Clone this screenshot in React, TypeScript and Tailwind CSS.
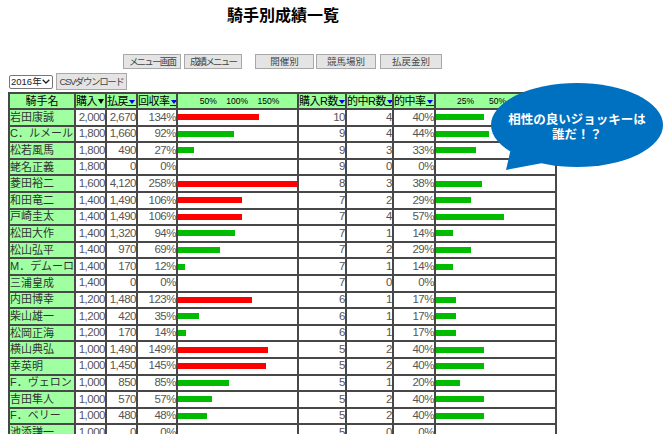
const font = '[font-family:"Liberation_Sans","Noto_Sans_CJK_JP",sans-serif]'

const riders: [string, string, string, number, number, number, number][] = [
  ["岩田康誠", "2,000", "2,670", 134, 10, 4, 40],
  ["C．ルメール", "1,800", "1,660", 92, 9, 4, 44],
  ["松若風馬", "1,800", "490", 27, 9, 3, 33],
  ["蛯名正義", "1,800", "0", 0, 9, 0, 0],
  ["菱田裕二", "1,600", "4,120", 258, 8, 3, 38],
  ["和田竜二", "1,400", "1,490", 106, 7, 2, 29],
  ["戸崎圭太", "1,400", "1,490", 106, 7, 4, 57],
  ["松田大作", "1,400", "1,320", 94, 7, 1, 14],
  ["松山弘平", "1,400", "970", 69, 7, 2, 29],
  ["M．デムーロ", "1,400", "170", 12, 7, 1, 14],
  ["三浦皇成", "1,400", "0", 0, 7, 0, 0],
  ["内田博幸", "1,200", "1,480", 123, 6, 1, 17],
  ["柴山雄一", "1,200", "420", 35, 6, 1, 17],
  ["松岡正海", "1,200", "170", 14, 6, 1, 17],
  ["横山典弘", "1,000", "1,490", 149, 5, 2, 40],
  ["幸英明", "1,000", "1,450", 145, 5, 2, 40],
  ["F．ヴェロン", "1,000", "850", 85, 5, 1, 20],
  ["吉田隼人", "1,000", "570", 57, 5, 2, 40],
  ["F．ベリー", "1,000", "480", 48, 5, 2, 40],
  ["池添謙一", "1,000", "0", 0, 5, 0, 0],
]

const menuButton =
  "h-[15px] border border-[#a8a8a8] bg-[#e4e4e4] text-[9.5px] leading-none text-[#444] flex items-center justify-center whitespace-nowrap"

function SortHead({ label, active }: { label: string; active?: boolean }) {
  return (
    <th className="border-2 border-[#484848] p-0 bg-[#99ff99] font-normal text-[11px] leading-none text-left whitespace-nowrap overflow-hidden">
      <div className="flex items-center justify-between">
        <span className="tracking-[-0.5px]">{label}</span>
        {active ? (
          <span className="w-0 h-0 mr-[1px] border-x-[3px] border-t-[5px] border-x-transparent border-t-black" />
        ) : (
          <span className="w-[8px] mt-[3px] border-b border-[#0000ee] flex justify-center shrink-0">
            <span className="w-0 h-0 mb-[1px] border-x-[3px] border-t-[4px] border-x-transparent border-t-[#0000ee]" />
          </span>
        )}
      </div>
    </th>
  )
}

function NumCell({ children }: { children: React.ReactNode }) {
  return (
    <td className="border-2 border-[#484848] bg-white p-0 text-right text-[11.5px] leading-none tracking-[-0.5px] text-[#555] whitespace-nowrap overflow-hidden">
      {children}
    </td>
  )
}

function BarCell({ width, color }: { width: number; color: string }) {
  return (
    <td className="border-2 border-[#484848] bg-white p-0 overflow-hidden">
      {width > 0 && (
        <div className={`h-[6px] ${color}`} style={{ width: Math.min(width, 120) }} />
      )}
    </td>
  )
}

export default function App() {
  return (
    <div className={`relative w-[670px] h-[434px] overflow-hidden bg-white text-black ${font}`}>
      <h1 className="pt-[6px] pl-[227px] text-[16px] leading-[20px] font-bold whitespace-nowrap">
        騎手別成績一覧
      </h1>

      {/* Menu buttons */}
      <div className="flex mt-[28px] ml-[123px]">
        <div className={`${menuButton} w-[58px] mr-[3px] tracking-[-1.8px]`}>メニュー画面</div>
        <div className={`${menuButton} w-[58px] mr-[13px] tracking-[-1.8px]`}>成績メニュー</div>
        <div className={`${menuButton} w-[59px] mr-[2px]`}>開催別</div>
        <div className={`${menuButton} w-[60px] mr-[4px]`}>競馬場別</div>
        <div className={`${menuButton} w-[62px]`}>払戻金別</div>
      </div>

      {/* Year and CSV */}
      <div className="flex items-center mt-[4px] ml-[9px] h-[17px]">
        <div className="w-[44px] h-[14px] border border-[#777] rounded-[2px] bg-white flex items-center justify-between pl-[1px] pr-[2px] text-[9.5px] leading-none text-[#222]">
          2016年
          <svg width="8" height="5" viewBox="0 0 8 5" fill="none" stroke="#222" strokeWidth="1.3">
            <path d="M0.7 0.7 4 4 7.3 0.7" />
          </svg>
        </div>
        <div className="ml-[3px] w-[71px] h-[17px] border border-[#a8a8a8] bg-[#e4e4e4] flex items-center justify-center text-[9.5px] leading-none tracking-[-1.4px] text-[#444] whitespace-nowrap">
          CSVダウンロード
        </div>
      </div>

      {/* Results table */}
      <table className="table-fixed border-collapse w-[547px] ml-[8px] mt-[2px]">
        <colgroup>
          <col className="w-[66px]" />
          <col className="w-[31px]" />
          <col className="w-[31px]" />
          <col className="w-[40px]" />
          <col className="w-[121px]" />
          <col className="w-[48px]" />
          <col className="w-[47px]" />
          <col className="w-[42px]" />
          <col className="w-[121px]" />
        </colgroup>
        <thead>
          <tr className="h-[16px]">
            <th className="border-2 border-[#484848] p-0 bg-[#99ff99] font-normal text-[11px] leading-none text-center">
              騎手名
            </th>
            <SortHead label="購入" active />
            <SortHead label="払戻" />
            <SortHead label="回収率" />
            <th className="border-2 border-[#484848] p-0 bg-[#99ff99] font-normal text-[8.5px] leading-none">
              <div className="flex justify-center gap-[9.5px] pl-[4px]">
                <span>50%</span>
                <span>100%</span>
                <span>150%</span>
              </div>
            </th>
            <SortHead label="購入R数" />
            <SortHead label="的中R数" />
            <SortHead label="的中率" />
            <th className="border-2 border-[#484848] p-0 bg-[#99ff99] font-normal text-[8.5px] leading-none">
              <div className="flex gap-[15px] pl-[21px]">
                <span>25%</span>
                <span>50%</span>
              </div>
            </th>
          </tr>
        </thead>
        <tbody>
          {riders.map(([name, buy, payout, rate, races, hits, hitRate]) => (
            <tr key={name} className="h-[16.6px]">
              <td className="border-2 border-[#484848] bg-[#a0ffa0] p-0 text-[11px] leading-none text-[#333] whitespace-nowrap overflow-hidden">
                {name}
              </td>
              <NumCell>{buy}</NumCell>
              <NumCell>{payout}</NumCell>
              <NumCell>{rate}%</NumCell>
              <BarCell width={rate * 0.605} color={rate >= 100 ? "bg-[#ff0000]" : "bg-[#00bb00]"} />
              <NumCell>{races}</NumCell>
              <NumCell>{hits}</NumCell>
              <NumCell>{hitRate}%</NumCell>
              <BarCell width={hitRate * 1.2} color="bg-[#00bb00]" />
            </tr>
          ))}
        </tbody>
      </table>

      {/* Speech bubble */}
      <div className="absolute left-[490px] top-[82px] w-[176px] h-[90px]">
        <svg width="176" height="90" viewBox="0 0 176 90" className="absolute inset-0">
          <ellipse cx="87" cy="43" rx="86" ry="42" fill="#0070c0" />
          <path d="M16 88 L22 62 L58 80 Z" fill="#0070c0" />
        </svg>
        <div className="absolute left-0 top-[31px] w-[174px] text-center text-white text-[12.5px] leading-[15px] font-bold whitespace-nowrap">
          相性の良いジョッキーは
          <br />
          誰だ！？
        </div>
      </div>
    </div>
  )
}
